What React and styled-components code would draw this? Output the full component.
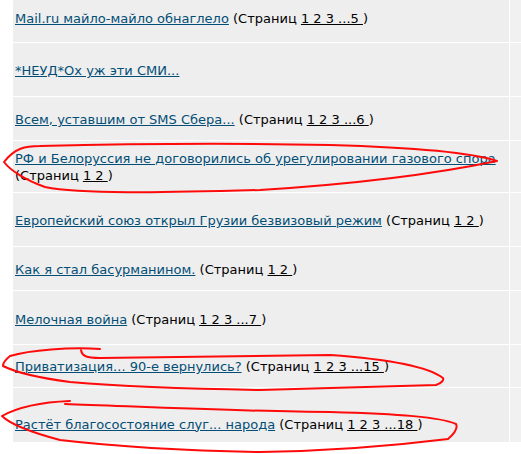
import React from "react";
import styled, { createGlobalStyle } from "styled-components";

const Global = createGlobalStyle`
  html, body { margin: 0; padding: 0; background: #ffffff; overflow: hidden; }
  body { font-family: Verdana, "DejaVu Sans", sans-serif; font-size: 13px; }
`;

const Page = styled.div`
  position: relative;
  width: 521px;
  height: 454px;
  overflow: hidden;
`;

const Grid = styled.div`
  margin-left: 13px;
  display: grid;
  grid-template-columns: 496px 60px;
  column-gap: 1px;
  row-gap: 1px;
`;

const TitleCell = styled.div`
  background: #eeeeee;
  height: ${(p) => p.$h}px;
  box-sizing: border-box;
  padding: ${(p) => p.$pt || 0}px 4px ${(p) => p.$pb || 0}px 2px;
  display: flex;
  align-items: center;
  line-height: 17px;
  color: #000;
`;

const SideCell = styled.div`
  background: #f1f1f1;
  height: ${(p) => p.$h}px;
`;

const Text = styled.div``;

const TopicLink = styled.a`
  color: #034e76;
  text-decoration: underline;
`;

const Pages = styled.span`
  text-decoration: underline;
  color: #000;
`;

const Overlay = styled.svg`
  position: absolute;
  left: 0;
  top: 0;
  pointer-events: none;
`;

const rows = [
  { t: "Mail.ru майло-майло обнаглело", p: "1 2 3 ...5 ", h: 42, pb: 6 },
  { t: "*НЕУД*Ох уж эти СМИ...", h: 53, pt: 2 },
  { t: "Всем, уставшим от SMS Сбера...", p: "1 2 3 ...6 ", h: 43, pt: 2 },
  { t: "РФ и Белоруссия не договорились об урегулировании газового спора", p: "1 2 ", h: 51, pt: 1 },
  { t: "Европейский союз открыл Грузии безвизовый режим", p: "1 2 ", h: 53, pt: 2 },
  { t: "Как я стал басурманином.", p: "1 2 ", h: 43, pt: 2 },
  { t: "Мелочная война", p: "1 2 3 ...7 ", h: 53, pt: 3 },
  { t: "Приватизация... 90-е вернулись?", p: "1 2 3 ...15 ", h: 42, pt: 1 },
  { t: "Растёт благосостояние слуг... народа", p: "1 2 3 ...18 ", h: 54, pt: 18 },
];

export default function App() {
  return (
    <Page>
      <Global />
      <Grid>
        {rows.map((r, i) => (
          <React.Fragment key={i}>
            <TitleCell $h={r.h} $pb={r.pb} $pt={r.pt}>
              <Text>
                <TopicLink href="#">{r.t}</TopicLink>
                {r.p && (
                  <>
                    {" (Страниц "}
                    <Pages>{r.p}</Pages>)
                  </>
                )}
              </Text>
            </TitleCell>
            <SideCell $h={r.h} />
          </React.Fragment>
        ))}
      </Grid>
      <Overlay width="521" height="454" viewBox="0 0 521 454">
        <g fill="none" stroke="#ff0a0a" strokeWidth="2" strokeLinecap="round" strokeLinejoin="round">
          <path d="M40 146 C 25 146, 15 148, 4 162 C 10 170, 25 180, 45 187 C 80 194, 160 193, 260 190 C 340 185, 430 175, 497 161 C 470 152, 400 147, 330 145 C 240 143, 120 144, 40 146" />
          <path d="M100 349 C 70 347, 30 350, 10 356 C 5 360, 3 364, 3 366 C 15 372, 40 378, 70 382 C 130 387, 200 389, 260 390 C 330 388, 400 386, 436 385 C 442 383, 444 380, 443 378 C 430 368, 400 360, 330 355 C 280 355, 200 357, 100 358 C 86 358, 82 356, 81 350" />
          <path d="M70 401 C 45 402, 20 406, 2 416 C 10 424, 30 432, 60 440 C 120 447, 200 451, 260 452 C 330 451, 400 445, 448 439 C 455 433, 458 428, 456 424 C 440 417, 400 414, 330 412 C 260 412, 150 407, 65 404" />
        </g>
      </Overlay>
    </Page>
  );
}
